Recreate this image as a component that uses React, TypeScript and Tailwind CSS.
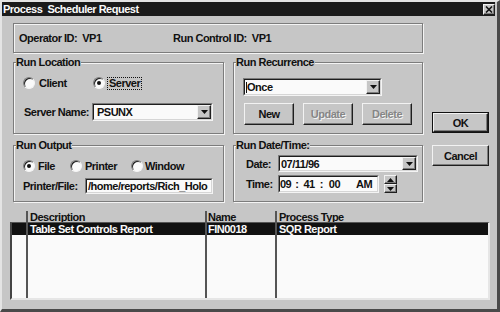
import React from "react";

const RAISED =
  "border border-t-[#f2f2f2] border-l-[#f2f2f2] border-r-[#1e1e1e] border-b-[#1e1e1e] shadow-[inset_-1px_-1px_0_#7c7c7c]";

function Group({ label, className, children }: { label: string; className?: string; children?: React.ReactNode }) {
  return (
    <div className={`border border-[#7c7c7c] shadow-[1px_1px_0_#f4f4f4,inset_1px_1px_0_#f4f4f4] ${className ?? ""}`}>
      <div className="-mt-[7px] ml-[2px] w-fit bg-[#c6c6c6] pr-[1px] leading-[12px]">{label}</div>
      {children}
    </div>
  );
}

function Sunken({ className, children }: { className?: string; children?: React.ReactNode }) {
  return (
    <div className={`border border-t-[#7c7c7c] border-l-[#7c7c7c] border-r-[#f4f4f4] border-b-[#f4f4f4] ${className ?? ""}`}>
      <div className="flex h-full w-full items-center overflow-hidden border border-t-[#1e1e1e] border-l-[#1e1e1e] border-r-[#d6d6d6] border-b-[#d6d6d6] bg-[#fafafa]">
        {children}
      </div>
    </div>
  );
}

function Tri({ up }: { up?: boolean }) {
  return (
    <svg width="7" height="4" viewBox="0 0 7 4">
      <polygon points={up ? "0,4 7,4 3.5,0" : "0,0 7,0 3.5,4"} fill="#111" />
    </svg>
  );
}

function Arrow() {
  return (
    <div className={`ml-auto flex h-full w-[14px] shrink-0 items-center justify-center bg-[#c6c6c6] ${RAISED}`}>
      <Tri />
    </div>
  );
}

function Radio({ checked }: { checked?: boolean }) {
  return (
    <span className="flex h-[12px] w-[12px] shrink-0 items-center justify-center rounded-full border border-t-[#7c7c7c] border-l-[#7c7c7c] border-r-[#f4f4f4] border-b-[#f4f4f4] bg-[#fafafa] shadow-[inset_1px_1px_0_#1e1e1e]">
      {checked && <span className="h-[4px] w-[4px] rounded-full bg-[#111]" />}
    </span>
  );
}

function Btn({ children, disabled, className }: { children: React.ReactNode; disabled?: boolean; className?: string }) {
  return (
    <div
      className={`flex items-center justify-center bg-[#c6c6c6] ${RAISED} ${
        disabled ? "text-[#868686] [text-shadow:1px_1px_0_#f4f4f4]" : ""
      } ${className ?? ""}`}
    >
      {children}
    </div>
  );
}

export default function App() {
  return (
    <div className="flex h-[312px] w-[500px] flex-col border-t-2 border-l-2 border-r-[3px] border-b-[3px] border-t-[#e4e4e4] border-l-[#e4e4e4] border-r-[#4a4a4a] border-b-[#4a4a4a] bg-[#c6c6c6] font-['Liberation_Sans',Arial,sans-serif] text-[11px] leading-[12px] font-bold tracking-[-0.5px] text-[#111]">
      {/* Title bar */}
      <div className="mr-[2px] flex h-[14px] shrink-0 items-start justify-between bg-[#1b1b1b] pl-[1px]">
        <span className="mt-[1px] whitespace-pre text-[#fafafa]">Process  Scheduler Request</span>
        <div className={`mt-[2px] flex h-[11px] w-[12px] items-center justify-center bg-[#c6c6c6] ${RAISED}`}>
          <svg width="8" height="7" viewBox="0 0 8 7">
            <path d="M1 0.5 L7 6.5 M7 0.5 L1 6.5" stroke="#111" strokeWidth="1.6" />
          </svg>
        </div>
      </div>

      {/* Operator panel */}
      <div className="mt-[7px] ml-[11px] flex h-[30px] w-[410px] shrink-0 items-center border border-[#7c7c7c] pl-[5px] shadow-[1px_1px_0_#f4f4f4,inset_1px_1px_0_#f4f4f4]">
        <span className="w-[154px] whitespace-pre">Operator ID:  VP1</span>
        <span className="whitespace-pre">Run Control ID:  VP1</span>
      </div>

      {/* Main area */}
      <div className="mt-[9px] ml-[11px] flex shrink-0">
        <div className="grid grid-cols-[211px_190px] grid-rows-[72px_57px] gap-x-[9px] gap-y-[11px]">
          <Group label="Run Location">
            <div className="mt-[9px] flex h-[12px] items-center pl-[9px]">
              <div className="flex w-[70px] items-center gap-[4px]">
                <Radio />
                <span>Client</span>
              </div>
              <div className="flex items-center gap-[2px]">
                <Radio checked />
                <span className="border border-dotted border-[#111] px-[1px] leading-[11px]">Server</span>
              </div>
            </div>
            <div className="mt-[14px] flex items-center pl-[10px]">
              <span className="w-[68px]">Server Name:</span>
              <Sunken className="h-[18px] w-[121px]">
                <span className="pl-[3px]">PSUNX</span>
                <Arrow />
              </Sunken>
            </div>
          </Group>

          <Group label="Run Recurrence">
            <div className="mt-[10px] ml-[9px]">
              <Sunken className="h-[18px] w-[139px]">
                <span className="ml-[1px] h-[11px] w-[1px] bg-[#111]" />
                <span>Once</span>
                <Arrow />
              </Sunken>
            </div>
            <div className="mt-[7px] ml-[10px] flex gap-[9px]">
              <Btn className="h-[22px] w-[50px]">New</Btn>
              <Btn className="h-[22px] w-[50px]" disabled>
                Update
              </Btn>
              <Btn className="h-[22px] w-[50px]" disabled>
                Delete
              </Btn>
            </div>
          </Group>

          <Group label="Run Output">
            <div className="mt-[9px] flex h-[12px] items-center pl-[9px]">
              <div className="flex w-[47px] items-center gap-[3px]">
                <Radio checked />
                <span>File</span>
              </div>
              <div className="flex w-[61px] items-center gap-[3px]">
                <Radio />
                <span>Printer</span>
              </div>
              <div className="flex items-center gap-[2px]">
                <Radio />
                <span>Window</span>
              </div>
            </div>
            <div className="mt-[6px] flex items-center pl-[9px]">
              <span className="w-[62px]">Printer/File:</span>
              <Sunken className="h-[16px] w-[128px]">
                <span className="pl-[1px] whitespace-nowrap">/home/reports/Rich_Holo</span>
              </Sunken>
            </div>
          </Group>

          <Group label="Run Date/Time:">
            <div className="mt-[4px] flex items-center pl-[12px]">
              <span className="w-[32px]">Date:</span>
              <Sunken className="h-[17px] w-[140px]">
                <span className="pl-[1px]">07/11/96</span>
                <Arrow />
              </Sunken>
            </div>
            <div className="mt-[3px] flex items-center pl-[12px]">
              <span className="w-[32px]">Time:</span>
              <Sunken className="h-[18px] w-[101px]">
                <span className="pl-[0px]">09</span>
                <span className="ml-[4px]">:</span>
                <span className="ml-[5px]">41</span>
                <span className="ml-[5px]">:</span>
                <span className="ml-[6px]">00</span>
                <span className="ml-[16px]">AM</span>
              </Sunken>
              <div className="ml-[5px] flex h-[18px] w-[13px] flex-col">
                <div className={`flex flex-1 items-center justify-center bg-[#c6c6c6] ${RAISED}`}>
                  <Tri up />
                </div>
                <div className={`flex flex-1 items-center justify-center bg-[#c6c6c6] ${RAISED}`}>
                  <Tri />
                </div>
              </div>
            </div>
          </Group>
        </div>

        <div className="ml-[9px] flex w-[57px] flex-col gap-[12px] pt-[50px]">
          <div className="h-[21px] border border-[#111]">
            <Btn className="h-full w-full">OK</Btn>
          </div>
          <Btn className="h-[21px] w-full">Cancel</Btn>
        </div>
      </div>

      {/* List */}
      <div className="mt-[9px] ml-[8px] flex w-[480px] shrink-0 flex-col">
        <div className="flex h-[11px] items-end">
          <div className="h-full w-[16px]" />
          <div className="h-full w-[179px] border-l-2 border-[#555] pl-[2px]">Description</div>
          <div className="h-full w-[70px] border-l-2 border-[#555] pl-[1px]">Name</div>
          <div className="h-full flex-1 border-l-2 border-[#555] pl-[2px]">Process Type</div>
        </div>
        <div className="flex h-[78px] border-t border-l-2 border-r-2 border-b-2 border-t-[#555] border-l-[#444] border-r-[#e6e6e6] border-b-[#e6e6e6] bg-[#fafafa]">
          <div className="flex w-[14px] flex-col">
            <div className="h-[12px] bg-[#111]" />
          </div>
          <div className="flex w-[179px] flex-col border-l-2 border-[#555]">
            <div className="h-[12px] bg-[#111] pl-[2px] text-[#fafafa]">Table Set Controls Report</div>
          </div>
          <div className="flex w-[70px] flex-col border-l-2 border-[#555]">
            <div className="h-[12px] bg-[#111] pl-[1px] text-[#fafafa]">FIN0018</div>
          </div>
          <div className="flex flex-1 flex-col border-l-2 border-[#555]">
            <div className="h-[12px] bg-[#111] pl-[2px] text-[#fafafa]">SQR Report</div>
          </div>
        </div>
      </div>
    </div>
  );
}
